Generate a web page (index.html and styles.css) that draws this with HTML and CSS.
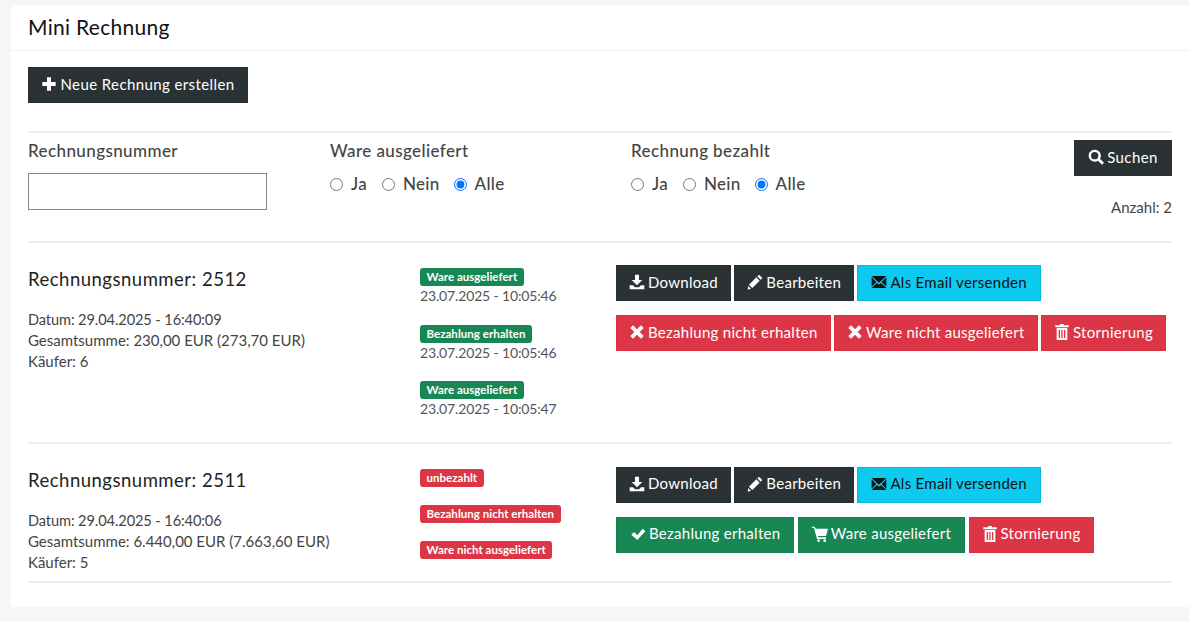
FILE: index.html
```html
<!DOCTYPE html>
<html lang="de">
<head>
<meta charset="utf-8">
<title>Mini Rechnung</title>
<link rel="stylesheet" href="styles.css">
</head>
<body>
<svg class="sprite" aria-hidden="true">
  <symbol id="i-plus" viewBox="0 0 24 24"><path d="M9 2h6v7h7v6h-7v7H9v-7H2V9h7z"/></symbol>
  <symbol id="i-search" viewBox="0 0 24 24"><path fill-rule="evenodd" d="M10 1a9 9 0 1 0 5 16.500l6 6 3-3-6-6A9 9 0 0 0 10 1zM10 4.500a5.500 5.500 0 1 1 0 11 5.500 5.500 0 0 1 0-11z"/></symbol>
  <symbol id="i-download" viewBox="0 0 24 24"><path d="M9 1h6v8h5l-8 8-8-8h5zM1 17h5l3 3h6l3-3h5v6H1z"/></symbol>
  <symbol id="i-pencil" viewBox="0 0 24 24"><path d="M18 1l5 5-2.500 2.500-5-5zM14 5l5 5L8 21l-5-5zM2 18l4 4-5 1.500z"/></symbol>
  <symbol id="i-mail" viewBox="0 0 24 24"><path d="M1 3h22L12 13zM1 5v14l7-7zM23 5v14l-7-7zM1 21l8-7.500 3 2.500 3-2.500 8 7.500z"/></symbol>
  <symbol id="i-x" viewBox="0 0 24 24"><path d="M6 2l6 6 6-6 4 4-6 6 6 6-4 4-6-6-6 6-4-4 6-6-6-6z"/></symbol>
  <symbol id="i-trash" viewBox="0 0 24 24"><path fill-rule="evenodd" d="M9 0h6v2h7v3H2V2h7zM4 6h16v18H4zM7 9v12h2V9zM11 9v12h2V9zM15 9v12h2V9z"/></symbol>
  <symbol id="i-check" viewBox="0 0 24 24"><path d="M2 13l4-4 5 5L19 4l4 4-12 13z"/></symbol>
  <symbol id="i-cart" viewBox="0 0 24 24"><path d="M0 1h4l1.500 3H24l-3 11H9l.5 2H21v2.500H7.500L3 3H0z"/><circle cx="10" cy="22" r="2"/><circle cx="19" cy="22" r="2"/></symbol>
</svg>
<main class="card">
  <header class="card-head"><h1 class="card-title">Mini Rechnung</h1></header>
  <div class="card-body">
    <div class="top-action">
      <button class="btn dark new"><svg class="ic"><use href="#i-plus"/></svg>Neue Rechnung erstellen</button>
    </div>
    <form class="filters">
      <div class="filter">
        <label class="f-label" for="nr">Rechnungsnummer</label>
        <input class="f-input" id="nr" type="text">
      </div>
      <div class="filter">
        <span class="f-label">Ware ausgeliefert</span>
        <div class="radios">
          <label class="radio r1"><input type="radio" name="w">Ja</label>
          <label class="radio r2"><input type="radio" name="w">Nein</label>
          <label class="radio"><input type="radio" name="w" checked>Alle</label>
        </div>
      </div>
      <div class="filter">
        <span class="f-label">Rechnung bezahlt</span>
        <div class="radios">
          <label class="radio r1"><input type="radio" name="b">Ja</label>
          <label class="radio r2"><input type="radio" name="b">Nein</label>
          <label class="radio"><input type="radio" name="b" checked>Alle</label>
        </div>
      </div>
      <div class="filter-end">
        <button class="btn dark search" type="button"><svg class="ic"><use href="#i-search"/></svg>Suchen</button>
        <div class="count">Anzahl: 2</div>
      </div>
    </form>

    <article class="inv">
      <div class="inv-info">
        <h2 class="inv-title">Rechnungsnummer: 2512</h2>
        <p class="inv-meta"><span class="nums">Datum: 29.04.2025 - 16:40:09</span><br>Gesamtsumme: 230,00 EUR (273,70 EUR)<br>Käufer: 6</p>
      </div>
      <div class="inv-status">
        <div class="st"><span class="badge green">Ware ausgeliefert</span><time class="st-time">23.07.2025 - 10:05:46</time></div>
        <div class="st"><span class="badge green">Bezahlung erhalten</span><time class="st-time">23.07.2025 - 10:05:46</time></div>
        <div class="st"><span class="badge green">Ware ausgeliefert</span><time class="st-time">23.07.2025 - 10:05:47</time></div>
      </div>
      <div class="inv-actions">
        <div class="btn-row">
          <button class="btn dark"><svg class="ic"><use href="#i-download"/></svg>Download</button>
          <button class="btn dark"><svg class="ic"><use href="#i-pencil"/></svg>Bearbeiten</button>
          <button class="btn cyan"><svg class="ic"><use href="#i-mail"/></svg>Als Email versenden</button>
        </div>
        <div class="btn-row">
          <button class="btn red"><svg class="ic"><use href="#i-x"/></svg>Bezahlung nicht erhalten</button>
          <button class="btn red"><svg class="ic"><use href="#i-x"/></svg>Ware nicht ausgeliefert</button>
          <button class="btn red"><svg class="ic"><use href="#i-trash"/></svg>Stornierung</button>
        </div>
      </div>
    </article>

    <article class="inv">
      <div class="inv-info">
        <h2 class="inv-title">Rechnungsnummer: 2511</h2>
        <p class="inv-meta"><span class="nums">Datum: 29.04.2025 - 16:40:06</span><br>Gesamtsumme: 6.440,00 EUR (7.663,60 EUR)<br>Käufer: 5</p>
      </div>
      <div class="inv-status">
        <div class="st"><span class="badge red">unbezahlt</span></div>
        <div class="st"><span class="badge red">Bezahlung nicht erhalten</span></div>
        <div class="st"><span class="badge red">Ware nicht ausgeliefert</span></div>
      </div>
      <div class="inv-actions">
        <div class="btn-row">
          <button class="btn dark"><svg class="ic"><use href="#i-download"/></svg>Download</button>
          <button class="btn dark"><svg class="ic"><use href="#i-pencil"/></svg>Bearbeiten</button>
          <button class="btn cyan"><svg class="ic"><use href="#i-mail"/></svg>Als Email versenden</button>
        </div>
        <div class="btn-row">
          <button class="btn green"><svg class="ic"><use href="#i-check"/></svg>Bezahlung erhalten</button>
          <button class="btn green"><svg class="ic"><use href="#i-cart"/></svg>Ware ausgeliefert</button>
          <button class="btn red"><svg class="ic"><use href="#i-trash"/></svg>Stornierung</button>
        </div>
      </div>
    </article>
  </div>
</main>
</body>
</html>
```
FILE: styles.css
```css
* { box-sizing: border-box; }
html, body { height: 100%; }
body {
  margin: 0;
  padding: 6px 0 15px 11px;
  background: #f6f6f6;
  font-family: "Lato", "Liberation Sans", sans-serif;
  font-size: 15px;
  line-height: 21px;
  color: #444;
  overflow: hidden;
}
.sprite { display: none; }
.card {
  background: #fff;
  border-radius: 4px 0 0 4px;
  height: 601px;
}
.card-head {
  height: 45px;
  padding: 0 17px 3px;
  display: flex;
  align-items: center;
  border-bottom: 1px solid #eee;
}
.card-title {
  margin: 0;
  font-size: 21px;
  font-weight: 400;
  letter-spacing: .3px;
  color: #111;
}
.card-body { padding: 16px 17px 0; }
.top-action { height: 66px; border-bottom: 2px solid #eee; }
.btn {
  display: inline-flex;
  align-items: center;
  justify-content: center;
  height: 36px;
  padding: 0 12px 2px;
  border: 1px solid transparent;
  font: inherit;
  letter-spacing: .275px;
  white-space: nowrap;
}
.ic { width: 16px; height: 16px; margin-right: 3px; fill: currentColor; flex: none; }
.dark { background: #2b3236; border-color: #272d30; color: #fff; }
.cyan { background: #0dcaf0; border-color: #0bb8db; color: #111; padding: 0 13px 2px; }
.red { background: #dc3545; border-color: #d92f40; color: #fff; }
.green { background: #198754; border-color: #17804f; color: #fff; }
.btn.green { padding: 0 13px 2px; }
.new { width: 220px; letter-spacing: .4px; }
.filters {
  display: grid;
  grid-template-columns: 302px 301px 1fr auto;
  height: 110px;
  border-bottom: 2px solid #eee;
  padding-top: 7px;
}
.f-label {
  display: block;
  font-size: 17px;
  font-weight: 500;
  line-height: 22px;
  color: #444;
  letter-spacing: .4px;
}
.f-input {
  display: block;
  width: 239px;
  height: 37px;
  margin-top: 11px;
  border: 1px solid #8a8a8a;
  background: #fff;
}
.radios { display: flex; margin-top: 11px; }
.radio {
  display: inline-flex;
  align-items: center;
  margin-right: 15px;
  font-size: 17px;
  font-weight: 500;
  line-height: 22px;
  letter-spacing: .3px;
}
.radio.r2 { margin-right: 14px; }
.radio input { width: 13px; height: 13px; margin: 0 8px 0 0; }
.filter-end { text-align: right; }
.search { width: 98px; letter-spacing: .4px; }
.count { margin-top: 20px; line-height: 22px; }
.inv {
  display: grid;
  grid-template-columns: 392px 196px 1fr;
  border-bottom: 2px solid #eee;
}
.inv-info { padding: 25px 0 8px; }
.inv-title {
  margin: 0;
  font-size: 18.500px;
  font-weight: 400;
  line-height: 22px;
  letter-spacing: .5px;
  color: #222;
}
.inv-meta { margin: 19px 0 0; }
.nums { font-size: 14.600px; letter-spacing: -.1px; }
.inv-status { padding: 25px 0 4px; }
.st { height: 36px; }
.st:has(.st-time) { height: 56.670px; }
.badge {
  display: block;
  width: fit-content;
  height: 18px;
  padding: 0 6.500px;
  border-radius: 3px;
  font-size: 11.500px;
  font-weight: 700;
  line-height: 18px;
  letter-spacing: .03px;
  color: #fff;
}
.st-time { display: block; font-size: 14px; letter-spacing: -.15px; line-height: 20px; color: #555; }
.inv-actions { padding-top: 22px; }
.inv + .inv .inv-actions { padding-top: 23px; }
.btn-row { display: flex; gap: 3.400px; margin-bottom: 14px; }
```
